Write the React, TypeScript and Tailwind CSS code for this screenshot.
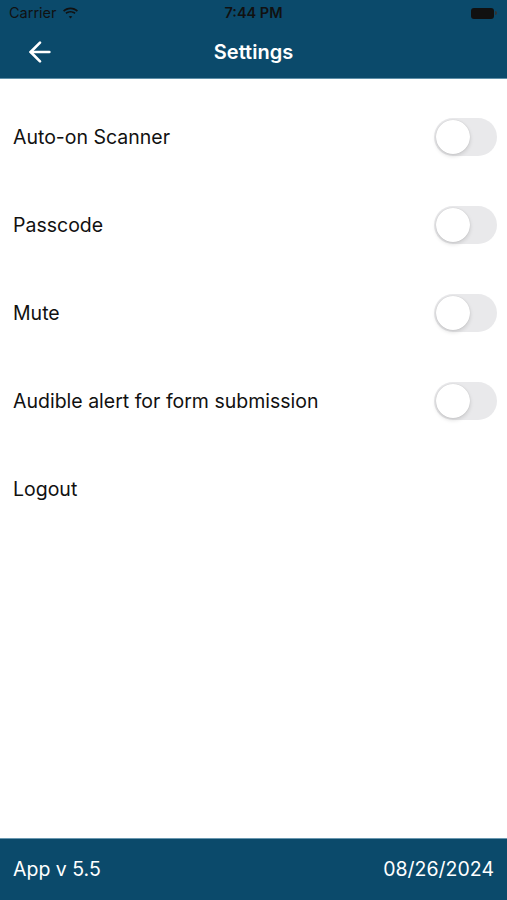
import { ArrowLeft } from 'lucide-react';

const rows = [
    { label: 'Auto-on Scanner', toggle: true },
    { label: 'Passcode', toggle: true },
    { label: 'Mute', toggle: true },
    { label: 'Audible alert for form submission', toggle: true },
    { label: 'Logout', toggle: false },
];

function Toggle() {
    return (
        <div className="w-[63px] h-[38px] rounded-full bg-[#e9e9eb] flex items-center px-[2px]">
            <div className="w-[34px] h-[34px] rounded-full bg-white shadow-[0_2px_4px_rgba(0,0,0,0.14),0_0_1px_rgba(0,0,0,0.18)]" />
        </div>
    );
}

function WifiIcon() {
    return (
        <svg width="17" height="12" viewBox="0 0 17 12" fill="#111">
            <path d="M8.5 2.2c2.4 0 4.6.9 6.3 2.5l1.2-1.3C14 1.5 11.4.4 8.5.4S3 1.5 1 3.4l1.2 1.3C3.9 3.1 6.1 2.2 8.5 2.2z" />
            <path d="M8.5 5.6c1.5 0 2.8.5 3.9 1.5l1.2-1.3c-1.4-1.2-3.1-1.9-5.1-1.9S4.8 4.6 3.4 5.8l1.2 1.3c1.1-1 2.4-1.5 3.9-1.5z" />
            <path d="M8.5 8.9c.7 0 1.3.3 1.8.7l-1.8 2-1.8-2c.5-.4 1.1-.7 1.8-.7z" />
        </svg>
    );
}

export default function App() {
    return (
        <div className="w-[507px] h-[900px] flex flex-col bg-white font-['Inter','Liberation_Sans',sans-serif]">
            {/* Header */}
            <div className="h-[79px] bg-[#0b4a6b] border-b border-[#5f8fa8] flex flex-col">
                <div className="h-[26px] flex items-center justify-between px-[9px] text-[#111] text-[14.5px]">
                    <div className="flex items-center gap-[5px] w-[120px]">
                        <span>Carrier</span>
                        <WifiIcon />
                    </div>
                    <span className="font-semibold">7:44 PM</span>
                    <div className="w-[120px] flex justify-end pr-[1px]">
                        <div className="flex items-center">
                            <div className="w-[23px] h-[11px] rounded-[3px] bg-[#111]" />
                            <div className="w-[2px] h-[4px] bg-[#333] rounded-r-sm ml-[1px]" />
                        </div>
                    </div>
                </div>
                <div className="flex-1 flex items-center relative">
                    <ArrowLeft size={32} strokeWidth={2} className="text-white ml-[24px] -mt-[1px]" />
                    <span className="absolute left-0 right-0 text-center text-white text-[20px] font-semibold pointer-events-none">
                        Settings
                    </span>
                </div>
            </div>

            {/* Settings rows */}
            <div className="flex-1 pt-[14px]">
                {rows.map((row) => (
                    <div key={row.label} className="h-[88px] flex items-center justify-between pl-[13px] pr-[10px]">
                        <span className="text-[19.5px] text-[#111] mt-[1px]">{row.label}</span>
                        {row.toggle && <Toggle />}
                    </div>
                ))}
            </div>

            {/* Footer */}
            <div className="h-[62px] bg-[#0b4a6b] border-t border-[#6a98b0] flex items-center justify-between px-[13px] text-white text-[19.5px]">
                <span>App v 5.5</span>
                <span>08/26/2024</span>
            </div>
        </div>
    );
}
